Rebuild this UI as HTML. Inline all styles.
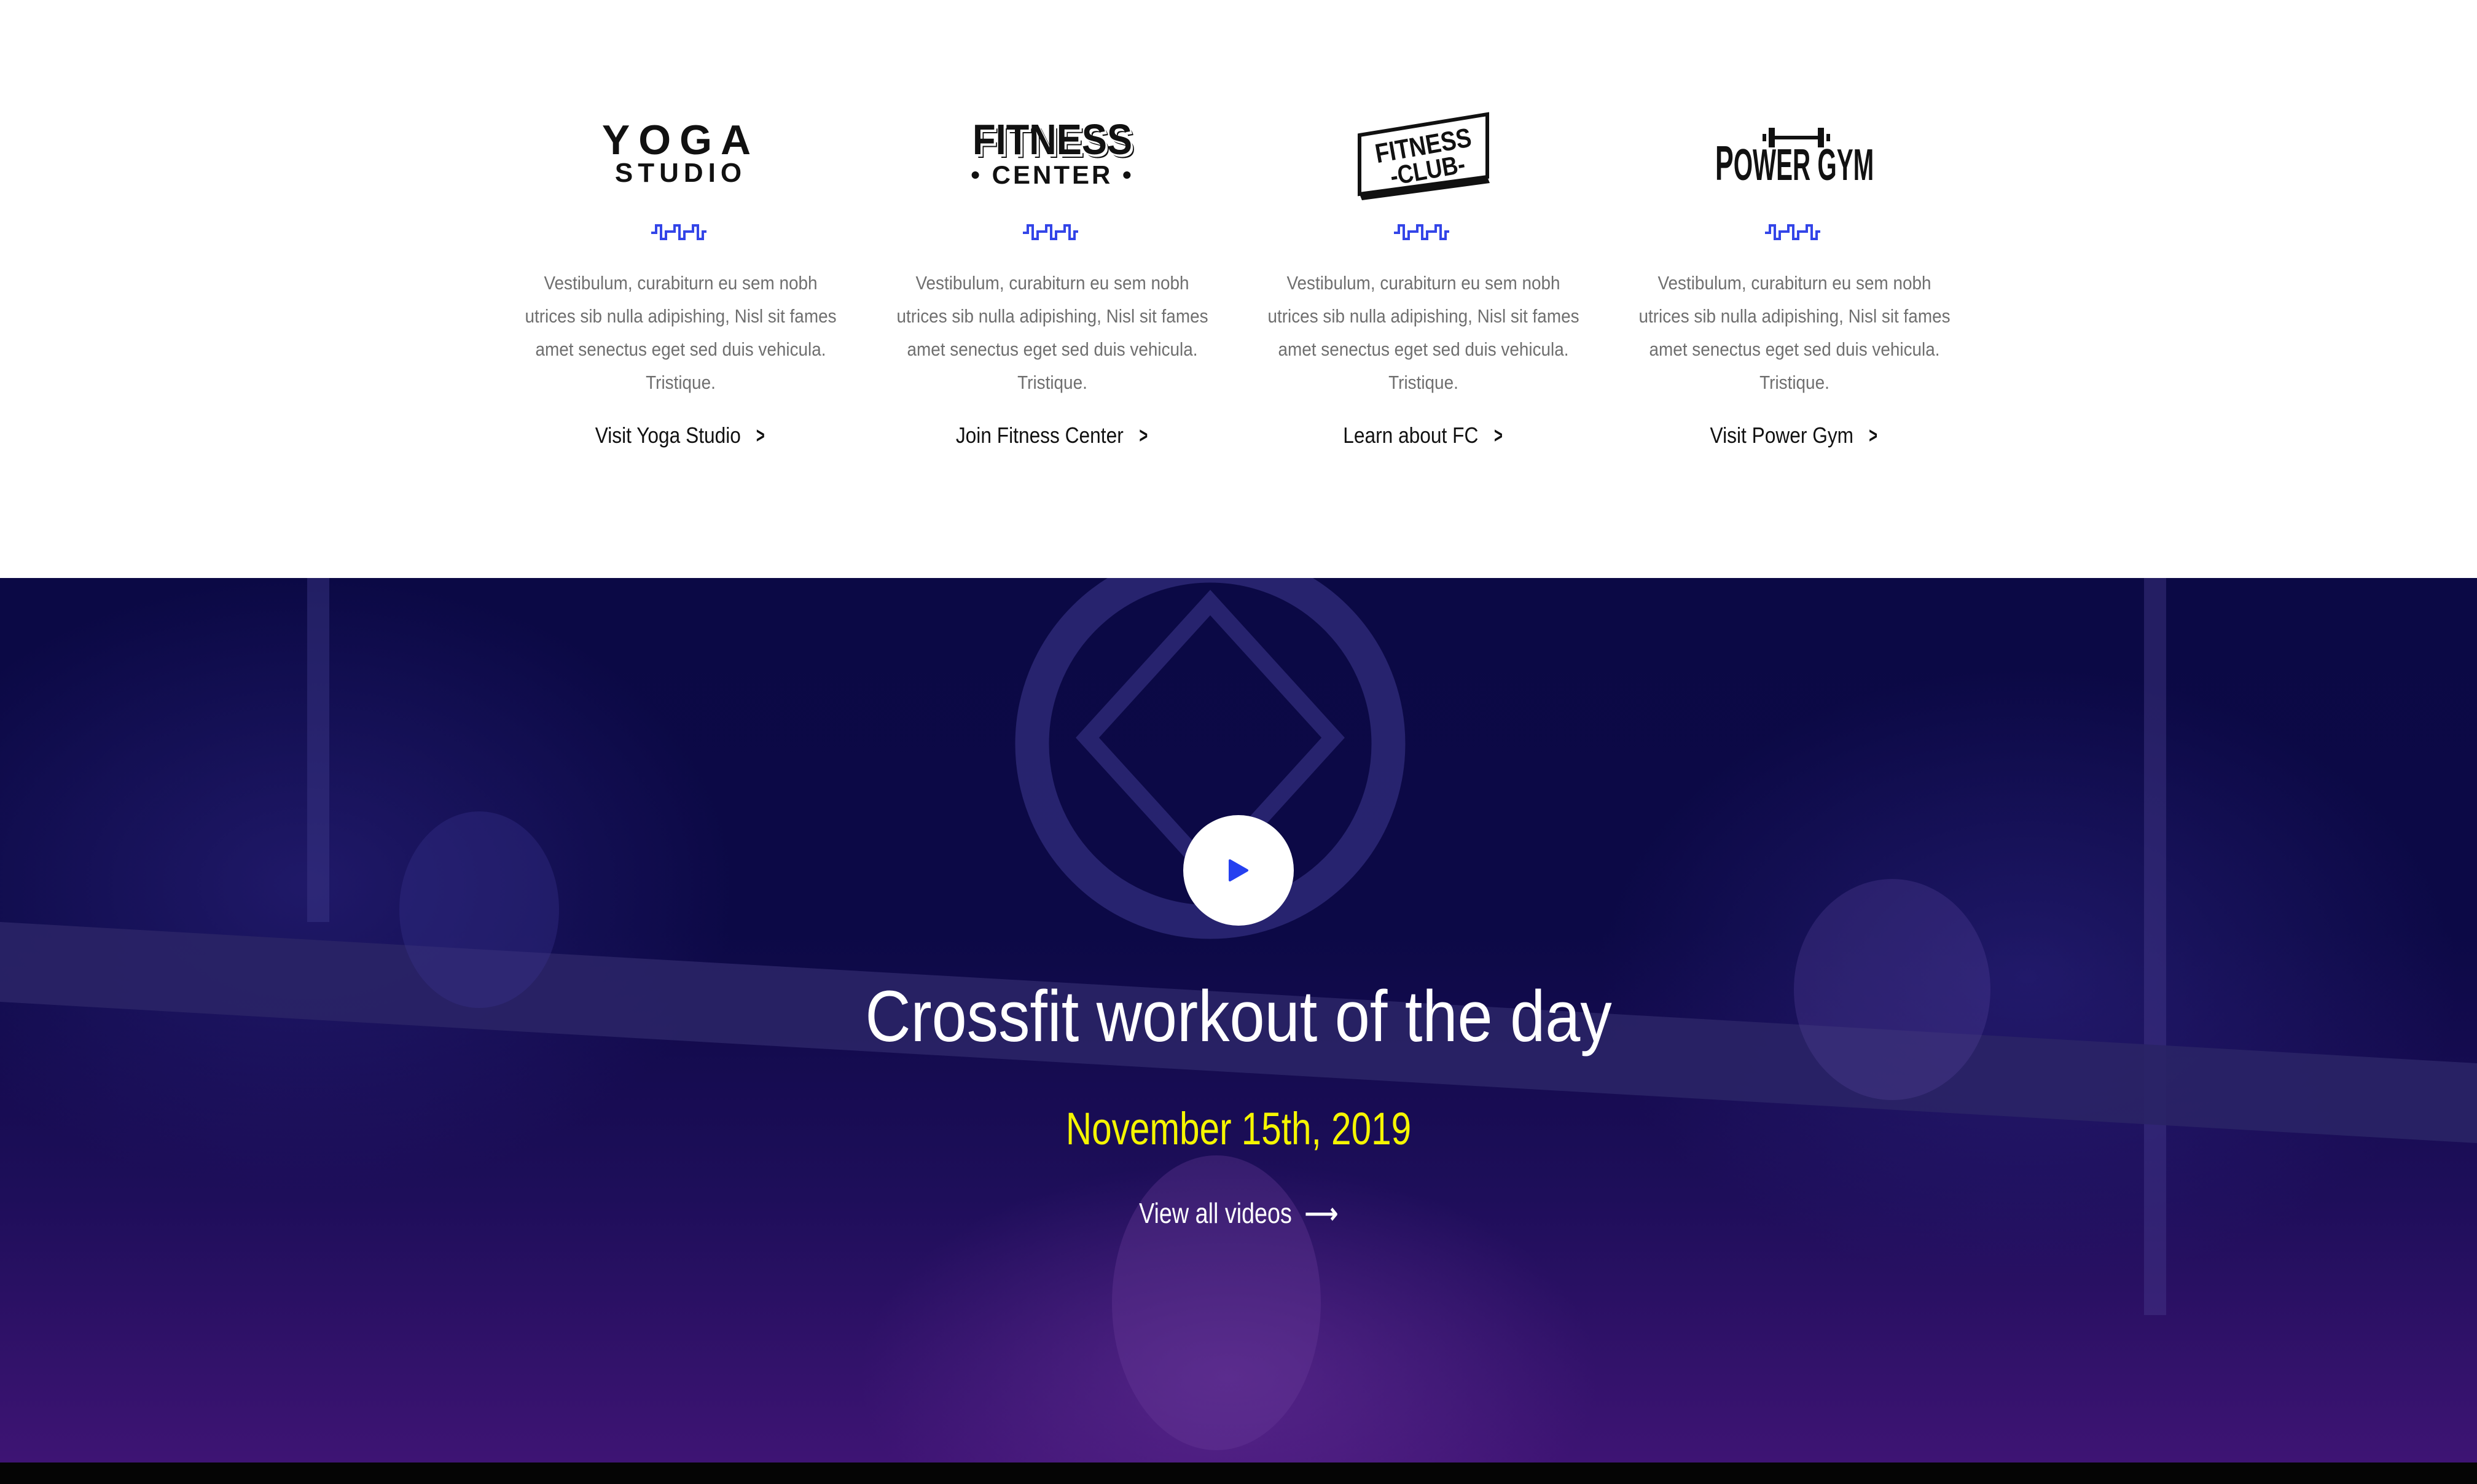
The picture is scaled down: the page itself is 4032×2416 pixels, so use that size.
<!DOCTYPE html>
<html><head><meta charset="utf-8"><style>
*{margin:0;padding:0;box-sizing:border-box}
html,body{width:4032px;height:2416px;overflow:hidden;background:#fff;font-family:"Liberation Sans",sans-serif}
.wrap{position:relative;width:4032px;height:2416px;overflow:hidden}
.col{position:absolute;top:0;width:560px;text-align:center}
.logo{position:absolute;left:0;width:560px;top:160px;height:180px}
.wave{position:absolute;left:230px;top:363px}
.txt{position:absolute;top:434px;left:-100px;width:760px;color:#6f6f6f;font-size:31px;line-height:54px;white-space:nowrap;transform:scaleX(.9)}
.lnk{position:absolute;top:684px;left:-100px;width:760px;color:#111;font-size:36px;line-height:50px;white-space:nowrap;transform:scaleX(.88)}
.lnk span{display:inline-block;margin-left:26px;font-weight:bold;transform:scaleX(.75)}
.dark{position:absolute;left:0;top:941px;width:4032px;height:1440px;overflow:hidden;
background:linear-gradient(180deg,#0b0945 0%,#0c0946 40%,#1e0e5a 70%,#3e1474 100%)}
.foot{position:absolute;left:0;top:2381px;width:4032px;height:35px;background:#050505}
.c{position:absolute;left:0;width:4032px;text-align:center;white-space:nowrap}
</style></head><body><div class="wrap">

<div class="col" style="left:828px">
 <div class="logo">
  <div style="position:absolute;top:34px;width:560px;font-size:68px;line-height:68px;letter-spacing:14px;font-weight:bold;color:#111">YOGA</div>
  <div style="position:absolute;top:100px;width:560px;font-size:44px;font-weight:bold;letter-spacing:8px;color:#111;line-height:44px">STUDIO</div>
 </div>
 <svg class="wave" width="100" height="32" viewBox="0 0 100 32"><path d="M2 16h8V4h8v22h8V14h14V4h8v22h8V14h14V4h8v22h8V14h6" fill="none" stroke="#3345e8" stroke-width="4"/></svg>
 <div class="txt">Vestibulum, curabiturn eu sem nobh<br>utrices sib nulla adipishing, Nisl sit fames<br>amet senectus eget sed duis vehicula.<br>Tristique.</div>
 <div class="lnk">Visit Yoga Studio<span>&gt;</span></div>
</div>

<div class="col" style="left:1433px">
 <div class="logo">
  <div style="position:absolute;top:32px;width:560px;font-size:70px;line-height:70px;font-weight:bold;color:#111;text-shadow:4px 4px 0 #fff,6px 6px 0 #111;transform:scaleX(.88)">FITNESS</div>
  <div style="position:absolute;top:104px;width:560px;font-size:42px;line-height:42px;font-weight:bold;color:#111;letter-spacing:4px">• CENTER •</div>
 </div>
 <svg class="wave" width="100" height="32" viewBox="0 0 100 32"><path d="M2 16h8V4h8v22h8V14h14V4h8v22h8V14h14V4h8v22h8V14h6" fill="none" stroke="#3345e8" stroke-width="4"/></svg>
 <div class="txt">Vestibulum, curabiturn eu sem nobh<br>utrices sib nulla adipishing, Nisl sit fames<br>amet senectus eget sed duis vehicula.<br>Tristique.</div>
 <div class="lnk">Join Fitness Center<span>&gt;</span></div>
</div>

<div class="col" style="left:2037px">
 <div class="logo">
  <svg style="position:absolute;left:170px;top:20px" width="224" height="150" viewBox="0 0 224 150">
   <path d="M6 40 L214 6 L214 108 L6 136 Z" fill="#fff" stroke="#111" stroke-width="6"/>
   <path d="M6 136 L214 108 L218 118 L10 146 Z" fill="#111"/>
   <g transform="rotate(-10 110 70) translate(112 0) scale(.85 1)">
    <text x="0" y="72" text-anchor="middle" font-family="Liberation Sans,sans-serif" font-weight="bold" font-size="44" fill="#111">FITNESS</text>
    <text x="0" y="112" text-anchor="middle" font-family="Liberation Sans,sans-serif" font-weight="bold" font-size="42" fill="#111">-CLUB-</text>
   </g>
  </svg>
 </div>
 <svg class="wave" width="100" height="32" viewBox="0 0 100 32"><path d="M2 16h8V4h8v22h8V14h14V4h8v22h8V14h14V4h8v22h8V14h6" fill="none" stroke="#3345e8" stroke-width="4"/></svg>
 <div class="txt">Vestibulum, curabiturn eu sem nobh<br>utrices sib nulla adipishing, Nisl sit fames<br>amet senectus eget sed duis vehicula.<br>Tristique.</div>
 <div class="lnk">Learn about FC<span>&gt;</span></div>
</div>

<div class="col" style="left:2641px">
 <div class="logo">
  <svg style="position:absolute;left:228px;top:48px" width="110" height="32" viewBox="0 0 110 32">
   <rect x="0" y="10" width="6" height="12" fill="#111"/><rect x="10" y="0" width="10" height="32" fill="#111"/>
   <rect x="20" y="13" width="70" height="6" fill="#111"/>
   <rect x="90" y="0" width="10" height="32" fill="#111"/><rect x="104" y="10" width="6" height="12" fill="#111"/>
  </svg>
  <div style="position:absolute;top:66px;left:-100px;width:760px;font-size:72px;line-height:80px;font-weight:bold;color:#111;transform:scaleX(.56)"><span style="font-size:80px">P</span>OWER GYM</div>
 </div>
 <svg class="wave" width="100" height="32" viewBox="0 0 100 32"><path d="M2 16h8V4h8v22h8V14h14V4h8v22h8V14h14V4h8v22h8V14h6" fill="none" stroke="#3345e8" stroke-width="4"/></svg>
 <div class="txt">Vestibulum, curabiturn eu sem nobh<br>utrices sib nulla adipishing, Nisl sit fames<br>amet senectus eget sed duis vehicula.<br>Tristique.</div>
 <div class="lnk">Visit Power Gym<span>&gt;</span></div>
</div>

<div class="dark">
 <svg width="4032" height="1440" style="position:absolute;left:0;top:0">
  <defs>
   <radialGradient id="g1" cx="0.5" cy="0.5" r="0.5"><stop offset="0" stop-color="#33288a" stop-opacity=".5"/><stop offset="1" stop-color="#33288a" stop-opacity="0"/></radialGradient>
   <radialGradient id="g2" cx="0.5" cy="0.5" r="0.5"><stop offset="0" stop-color="#7a3aa8" stop-opacity=".45"/><stop offset="1" stop-color="#7a3aa8" stop-opacity="0"/></radialGradient>
  </defs>
  <ellipse cx="500" cy="500" rx="700" ry="500" fill="url(#g1)"/>
  <ellipse cx="3300" cy="650" rx="700" ry="500" fill="url(#g1)"/>
  <ellipse cx="2000" cy="1300" rx="600" ry="350" fill="url(#g2)"/>
  <rect x="500" y="0" width="36" height="560" fill="#3d3a8a" opacity=".45"/>
  <rect x="3490" y="0" width="36" height="1200" fill="#4a3e90" opacity=".4"/>
  <circle cx="1970" cy="270" r="290" fill="none" stroke="#332f80" stroke-width="55" opacity=".7"/>
  <path d="M1970 40 L2170 260 L1970 480 L1770 260 Z" fill="none" stroke="#332f80" stroke-width="28" opacity=".7"/>
  <path d="M0 560 L4032 790 L4032 920 L0 690 Z" fill="#2a2466" opacity=".9"/>
  <ellipse cx="780" cy="540" rx="130" ry="160" fill="#3a3590" opacity=".35"/>
  <ellipse cx="3080" cy="670" rx="160" ry="180" fill="#5a44a0" opacity=".3"/>
  <ellipse cx="1980" cy="1180" rx="170" ry="240" fill="#6a3c9c" opacity=".35"/>
 </svg>
 <div style="position:absolute;left:1926px;top:386px;width:180px;height:180px;border-radius:50%;background:#fff"></div>
 <svg style="position:absolute;left:1998px;top:458px" width="36" height="36" viewBox="0 0 36 36"><path d="M4 2 L32 18 L4 34 Z" fill="#2540f0" stroke="#2540f0" stroke-width="4" stroke-linejoin="round"/></svg>
 <div class="c" style="top:644px;color:#fff;font-size:118px;line-height:140px;transform:scaleX(.87)">Crossfit workout of the day</div>
 <div class="c" style="top:852px;color:#f5f500;font-size:74px;line-height:90px;transform:scaleX(.79)">November 15th, 2019</div>
 <div class="c" style="top:1006px;color:#fff;font-size:46px;line-height:56px;transform:scaleX(.82)">View all videos &nbsp;<b>&#10230;</b></div>
</div>
<div class="foot"></div>
</div></body></html>
